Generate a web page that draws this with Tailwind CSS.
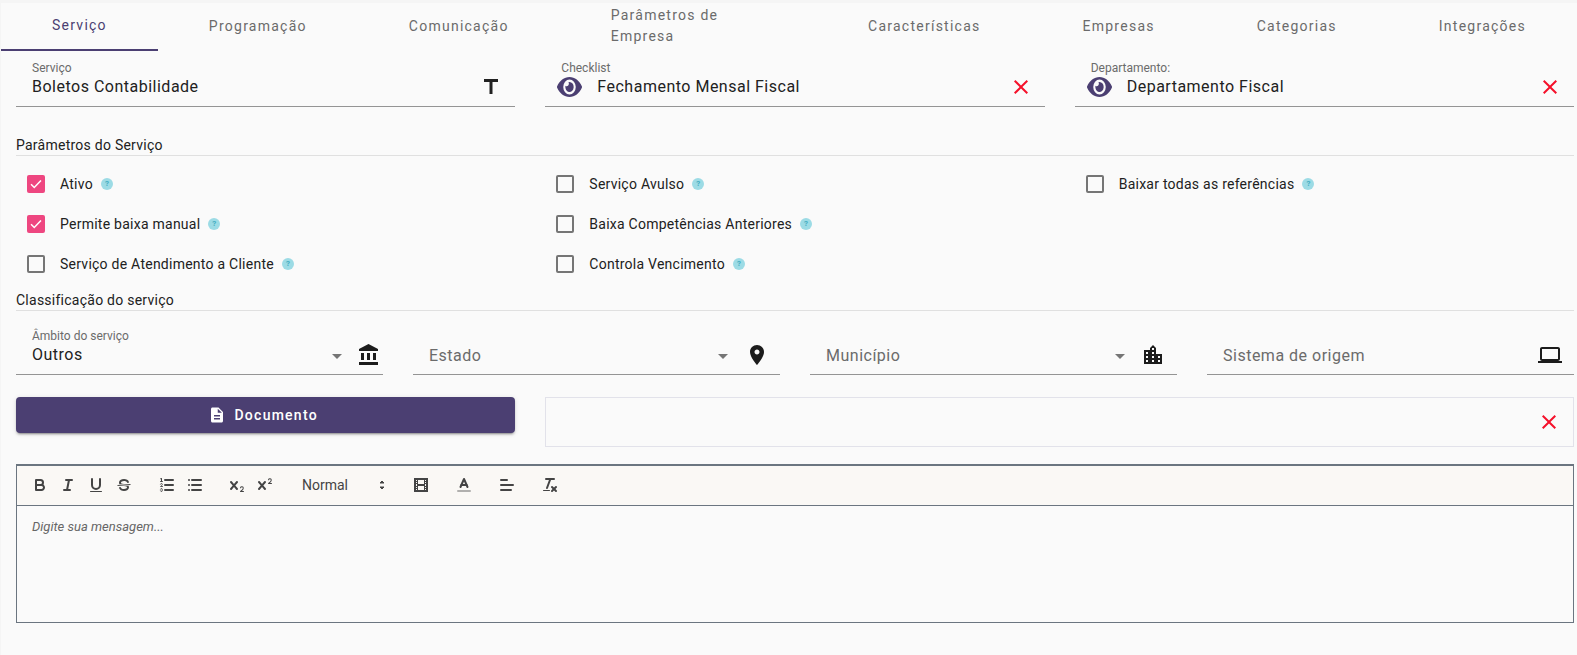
<!DOCTYPE html>
<html lang="pt-BR">
<head>
<meta charset="utf-8">
<title>Serviço</title>
<script src="https://cdn.jsdelivr.net/npm/@tailwindcss/browser@4"></script>
</head>
<body class="overflow-hidden">
<div class="h-[655px] w-[1577px] bg-[#f5f5f5] pt-[3px] pl-px font-['Roboto',sans-serif] text-[14px] tracking-[0.25px] text-[#212121]">
<div class="h-full bg-[#fafafa]">

<!-- Tabs -->
<div class="flex h-[48px] text-[14px] tracking-[1.25px] text-[#6b6b6b]">
  <div class="flex flex-auto items-center justify-center border-b-2 border-[#4b3f72] px-[51px] pb-[2px] text-[#4b3f72]">Serviço</div>
  <div class="flex flex-auto items-center justify-center px-[51px] pb-[2px]">Programação</div>
  <div class="flex flex-auto items-center justify-center px-[51px] pb-[2px]">Comunicação</div>
  <div class="flex flex-auto items-center justify-center px-[51px] pb-[2px]">Parâmetros de Empresa</div>
  <div class="flex flex-auto items-center justify-center px-[51px] pb-[2px]">Características</div>
  <div class="flex flex-auto items-center justify-center px-[51px] pb-[2px]">Empresas</div>
  <div class="flex flex-auto items-center justify-center px-[51px] pb-[2px]">Categorias</div>
  <div class="flex flex-auto items-center justify-center px-[51px] pb-[2px]">Integrações</div>
</div>

<div class="pl-[15px] pr-[3px]">
  <!-- Top fields -->
  <div class="grid grid-cols-3 gap-x-[30px]">
    <div class="border-b border-[#949494] pt-[10px] pb-[7px]">
      <div class="pl-4 text-[12px] leading-[14px] tracking-normal text-[#6b6b6b]">Serviço</div>
      <div class="flex h-6 items-center justify-between pl-4 pr-3">
        <span class="text-[16px] leading-6 tracking-[0.5px]">Boletos Contabilidade</span>
        <svg class="h-6 w-6 text-[#212121]" viewBox="0 0 24 24" fill="currentColor"><path d="M5 4v3h5.5v12h3V7H19V4z"/></svg>
      </div>
    </div>
    <div class="border-b border-[#949494] pt-[10px] pb-[7px]">
      <div class="pl-4 text-[12px] leading-[14px] tracking-normal text-[#6b6b6b]">Checklist</div>
      <div class="flex h-6 items-center pl-3 pr-3">
        <svg class="mr-[15px] h-[20px] w-[25px] text-[#4b3f72]" viewBox="0 64 576 384" preserveAspectRatio="none" fill="currentColor"><path d="M572.52 241.4C518.29 135.59 410.93 64 288 64S57.68 135.64 3.48 241.41a32.35 32.35 0 0 0 0 29.19C57.71 376.41 165.07 448 288 448s230.32-71.64 284.52-177.41a32.35 32.35 0 0 0 0-29.19zM288 400a144 144 0 1 1 144-144 143.93 143.93 0 0 1-144 144zm0-240a95.31 95.31 0 0 0-25.31 3.79 47.85 47.85 0 0 1-66.9 66.9A95.78 95.78 0 1 0 288 160z"/></svg>
        <span class="flex-1 text-[16px] leading-6 tracking-[0.5px]">Fechamento Mensal Fiscal</span>
        <svg class="h-6 w-6 text-[#f5102a]" viewBox="0 0 24 24" fill="currentColor"><path d="M19 6.41L17.59 5 12 10.59 6.41 5 5 6.41 10.59 12 5 17.59 6.41 19 12 13.41 17.59 19 19 17.59 13.41 12z"/></svg>
      </div>
    </div>
    <div class="border-b border-[#949494] pt-[10px] pb-[7px]">
      <div class="pl-4 text-[12px] leading-[14px] tracking-normal text-[#6b6b6b]">Departamento:</div>
      <div class="flex h-6 items-center pl-3 pr-3">
        <svg class="mr-[15px] h-[20px] w-[25px] text-[#4b3f72]" viewBox="0 64 576 384" preserveAspectRatio="none" fill="currentColor"><path d="M572.52 241.4C518.29 135.59 410.93 64 288 64S57.68 135.64 3.48 241.41a32.35 32.35 0 0 0 0 29.19C57.71 376.41 165.07 448 288 448s230.32-71.64 284.52-177.41a32.35 32.35 0 0 0 0-29.19zM288 400a144 144 0 1 1 144-144 143.93 143.93 0 0 1-144 144zm0-240a95.31 95.31 0 0 0-25.31 3.79 47.85 47.85 0 0 1-66.9 66.9A95.78 95.78 0 1 0 288 160z"/></svg>
        <span class="flex-1 text-[16px] leading-6 tracking-[0.5px]">Departamento Fiscal</span>
        <svg class="h-6 w-6 text-[#f5102a]" viewBox="0 0 24 24" fill="currentColor"><path d="M19 6.41L17.59 5 12 10.59 6.41 5 5 6.41 10.59 12 5 17.59 6.41 19 12 13.41 17.59 19 19 17.59 13.41 12z"/></svg>
      </div>
    </div>
  </div>

  <!-- Parâmetros -->
  <div class="mt-[29px] h-[20px] border-b border-[#e0e0e0] leading-[19px]">Parâmetros do Serviço</div>
  <div class="mt-[8px] grid grid-cols-3 gap-x-[30px]">
    <div class="flex h-10 items-center pl-[11px]">
      <span class="mr-[15px] flex h-[18px] w-[18px] items-center justify-center rounded-[2px] bg-[#ee4680]"><svg class="h-[14px] w-[14px]" viewBox="0 0 24 24" fill="none" stroke="#fff" stroke-width="2.6"><path d="M3.5 12.5l5.5 5.5L20.5 6"/></svg></span>
      <span class="pt-px">Ativo</span>
      <span class="ml-[8px] flex h-3 w-3 items-center justify-center rounded-full bg-[#9cdbe5] text-[8px] font-bold leading-none tracking-normal text-[#45aec2]">?</span>
    </div>
    <div class="flex h-10 items-center pl-[11px]">
      <span class="mr-[15px] h-[18px] w-[18px] rounded-[2px] border-2 border-[#757575]"></span>
      <span class="pt-px">Serviço Avulso</span>
      <span class="ml-[8px] flex h-3 w-3 items-center justify-center rounded-full bg-[#9cdbe5] text-[8px] font-bold leading-none tracking-normal text-[#45aec2]">?</span>
    </div>
    <div class="flex h-10 items-center pl-[11px]">
      <span class="mr-[15px] h-[18px] w-[18px] rounded-[2px] border-2 border-[#757575]"></span>
      <span class="pt-px">Baixar todas as referências</span>
      <span class="ml-[8px] flex h-3 w-3 items-center justify-center rounded-full bg-[#9cdbe5] text-[8px] font-bold leading-none tracking-normal text-[#45aec2]">?</span>
    </div>
    <div class="flex h-10 items-center pl-[11px]">
      <span class="mr-[15px] flex h-[18px] w-[18px] items-center justify-center rounded-[2px] bg-[#ee4680]"><svg class="h-[14px] w-[14px]" viewBox="0 0 24 24" fill="none" stroke="#fff" stroke-width="2.6"><path d="M3.5 12.5l5.5 5.5L20.5 6"/></svg></span>
      <span class="pt-px">Permite baixa manual</span>
      <span class="ml-[8px] flex h-3 w-3 items-center justify-center rounded-full bg-[#9cdbe5] text-[8px] font-bold leading-none tracking-normal text-[#45aec2]">?</span>
    </div>
    <div class="flex h-10 items-center pl-[11px]">
      <span class="mr-[15px] h-[18px] w-[18px] rounded-[2px] border-2 border-[#757575]"></span>
      <span class="pt-px">Baixa Competências Anteriores</span>
      <span class="ml-[8px] flex h-3 w-3 items-center justify-center rounded-full bg-[#9cdbe5] text-[8px] font-bold leading-none tracking-normal text-[#45aec2]">?</span>
    </div>
    <div></div>
    <div class="flex h-10 items-center pl-[11px]">
      <span class="mr-[15px] h-[18px] w-[18px] rounded-[2px] border-2 border-[#757575]"></span>
      <span class="pt-px">Serviço de Atendimento a Cliente</span>
      <span class="ml-[8px] flex h-3 w-3 items-center justify-center rounded-full bg-[#9cdbe5] text-[8px] font-bold leading-none tracking-normal text-[#45aec2]">?</span>
    </div>
    <div class="flex h-10 items-center pl-[11px]">
      <span class="mr-[15px] h-[18px] w-[18px] rounded-[2px] border-2 border-[#757575]"></span>
      <span class="pt-px">Controla Vencimento</span>
      <span class="ml-[8px] flex h-3 w-3 items-center justify-center rounded-full bg-[#9cdbe5] text-[8px] font-bold leading-none tracking-normal text-[#45aec2]">?</span>
    </div>
    <div></div>
  </div>

  <!-- Classificação -->
  <div class="mt-[7px] h-[20px] border-b border-[#e0e0e0] leading-[19px]">Classificação do serviço</div>
  <div class="grid grid-cols-4 gap-x-[30px]">
    <div class="h-[64px] border-b border-[#949494] pt-[18px]">
      <div class="pl-4 text-[12px] leading-[14px] tracking-normal text-[#6b6b6b]">Âmbito do serviço</div>
      <div class="flex h-6 items-center pl-4 pr-[2px]">
        <span class="flex-1 text-[16px] leading-6 tracking-[0.5px]">Outros</span>
        <svg class="mr-[15px] mt-[2px] h-[5px] w-[10px] text-[#757575]" viewBox="0 0 10 5" fill="currentColor"><path d="M0 0h10L5 5z"/></svg>
        <svg class="h-6 w-6 text-[#1c1c1c]" viewBox="0 0 24 24" fill="currentColor"><path d="M4 10v7h3v-7H4zm6 0v7h3v-7h-3zM2 22h19v-3H2v3zm14-12v7h3v-7h-3zm-4.5-9L2 6v2h19V6l-9.5-5z"/></svg>
      </div>
    </div>
    <div class="h-[64px] border-b border-[#949494] pt-[33px]">
      <div class="flex h-6 items-center pl-4 pr-[11px]">
        <span class="flex-1 text-[16px] leading-6 tracking-[0.5px] text-[#6b6b6b]">Estado</span>
        <svg class="mr-[17px] h-[5px] w-[10px] text-[#757575]" viewBox="0 0 10 5" fill="currentColor"><path d="M0 0h10L5 5z"/></svg>
        <svg class="-mt-[2px] h-6 w-6 text-[#1c1c1c]" viewBox="0 0 24 24" fill="currentColor"><path d="M12 2C8.13 2 5 5.13 5 9c0 5.25 7 13 7 13s7-7.75 7-13c0-3.87-3.13-7-7-7zm0 9.5c-1.38 0-2.5-1.12-2.5-2.5s1.12-2.5 2.5-2.5 2.5 1.12 2.5 2.5-1.12 2.5-2.5 2.5z"/></svg>
      </div>
    </div>
    <div class="h-[64px] border-b border-[#949494] pt-[33px]">
      <div class="flex h-6 items-center pl-4 pr-[12px]">
        <span class="flex-1 text-[16px] leading-6 tracking-[0.5px] text-[#6b6b6b]">Município</span>
        <svg class="mr-[16px] h-[5px] w-[10px] text-[#757575]" viewBox="0 0 10 5" fill="currentColor"><path d="M0 0h10L5 5z"/></svg>
        <svg class="-mt-[2px] h-6 w-6 text-[#1c1c1c]" viewBox="0 0 24 24" fill="currentColor"><path d="M15 11V5l-3-3-3 3v2H3v14h18V11h-6zm-8 8H5v-2h2v2zm0-4H5v-2h2v2zm0-4H5V9h2v2zm6 8h-2v-2h2v2zm0-4h-2v-2h2v2zm0-4h-2V9h2v2zm0-4h-2V5h2v2zm6 12h-2v-2h2v2zm0-4h-2v-2h2v2z"/></svg>
      </div>
    </div>
    <div class="h-[64px] border-b border-[#949494] pt-[33px]">
      <div class="flex h-6 items-center pl-4 pr-[12px]">
        <span class="flex-1 text-[16px] leading-6 tracking-[0.5px] text-[#6b6b6b]">Sistema de origem</span>
        <svg class="-mt-[2px] h-6 w-6 text-[#1c1c1c]" viewBox="0 0 24 24" fill="currentColor"><path d="M20 18c1.1 0 1.99-.9 1.99-2L22 6c0-1.1-.9-2-2-2H4c-1.1 0-2 .9-2 2v10c0 1.1.9 2 2 2H0v2h24v-2h-4zM4 6h16v10H4V6z"/></svg>
      </div>
    </div>
  </div>

  <!-- Documento -->
  <div class="mt-[22px] grid grid-cols-3 items-start gap-x-[30px]">
    <div class="flex h-[36px] items-center justify-center rounded-[4px] bg-[#4b3f72] pr-[5px] text-[14px] font-medium tracking-[1.25px] text-white shadow-[0_3px_1px_-2px_rgba(0,0,0,0.2),0_2px_2px_0_rgba(0,0,0,0.14),0_1px_5px_0_rgba(0,0,0,0.12)]">
      <svg class="mr-2 h-[18px] w-[18px]" viewBox="0 0 24 24" fill="currentColor"><path d="M14 2H6c-1.1 0-1.99.9-1.99 2L4 20c0 1.1.89 2 1.99 2H18c1.1 0 2-.9 2-2V8l-6-6zm2 16H8v-2h8v2zm0-4H8v-2h8v2zm-3-5V3.5L18.5 9H13z"/></svg>
      <span>Documento</span>
    </div>
    <div class="col-span-2 flex h-[50px] items-center justify-end border border-[#e2e2ea] pr-[12px]">
      <svg class="h-6 w-6 text-[#f5102a]" viewBox="0 0 24 24" fill="currentColor"><path d="M19 6.41L17.59 5 12 10.59 6.41 5 5 6.41 10.59 12 5 17.59 6.41 19 12 13.41 17.59 19 19 17.59 13.41 12z"/></svg>
    </div>
  </div>

  <!-- Editor -->
  <div class="mt-[17px] h-[159px] border border-t-2 border-[#6b7580]">
    <div class="flex h-[40px] items-start border-b border-[#6b7580] bg-[#faf8f5] pl-[9px] pt-[7px] text-[#444]">
      <div class="flex">
        <span class="flex h-6 w-7 items-center justify-center"><svg class="h-[18px] w-[18px]" viewBox="0 0 18 18" fill="none" stroke="#444" stroke-width="2" stroke-linecap="round" stroke-linejoin="round"><path d="M5,4H9.5A2.5,2.5,0,0,1,12,6.5v0A2.5,2.5,0,0,1,9.5,9H5A0,0,0,0,1,5,9V4A0,0,0,0,1,5,4Z"/><path d="M5,9h5.5A2.5,2.5,0,0,1,13,11.5v0A2.5,2.5,0,0,1,10.5,14H5a0,0,0,0,1,0,0V9A0,0,0,0,1,5,9Z"/></svg></span>
        <span class="flex h-6 w-7 items-center justify-center"><svg class="h-[18px] w-[18px]" viewBox="0 0 18 18" fill="none" stroke="#444" stroke-width="2" stroke-linecap="round"><line x1="7" x2="13" y1="4" y2="4"/><line x1="5" x2="11" y1="14" y2="14"/><line x1="8" x2="10" y1="14" y2="4"/></svg></span>
        <span class="flex h-6 w-7 items-center justify-center"><svg class="h-[18px] w-[18px]" viewBox="0 0 18 18" fill="none" stroke="#444" stroke-width="2" stroke-linecap="round"><path d="M5,3V9a4.012,4.012,0,0,0,4,4H9a4.012,4.012,0,0,0,4-4V3"/><rect fill="#444" stroke="none" height="1" rx=".5" ry=".5" width="12" x="3" y="15"/></svg></span>
        <span class="flex h-6 w-7 items-center justify-center"><svg class="h-[18px] w-[18px]" viewBox="0 0 18 18" fill="none"><line stroke="#444" stroke-width="1" x1="15.5" x2="2.5" y1="8.5" y2="9.5"/><path fill="#444" d="M9.007,8C6.542,7.791,6,7.519,6,6.5,6,5.792,7.283,5,9,5c1.571,0,2.765.679,2.969,1.309a1,1,0,0,0,1.9-.617C13.356,4.106,11.354,3,9,3,6.2,3,4,4.538,4,6.5a3.2,3.2,0,0,0,.5,1.843Z"/><path fill="#444" d="M8.984,10C11.457,10.208,12,10.479,12,11.5c0,.708-1.283,1.5-3,1.5-1.571,0-2.765-.679-2.969-1.309a1,1,0,1,0-1.9.617C4.644,13.894,6.646,15,9,15c2.8,0,5-1.538,5-3.5a3.2,3.2,0,0,0-.5-1.843Z"/></svg></span>
      </div>
      <div class="ml-[15px] flex">
        <span class="flex h-6 w-7 items-center justify-center"><svg class="h-[18px] w-[18px]" viewBox="0 0 18 18" fill="none" stroke="#444" stroke-linecap="round" stroke-linejoin="round"><g stroke-width="2"><line x1="7" x2="15" y1="4" y2="4"/><line x1="7" x2="15" y1="9" y2="9"/><line x1="7" x2="15" y1="14" y2="14"/></g><line stroke-width=".9" x1="2.5" x2="4.5" y1="5.5" y2="5.5"/><path fill="#444" stroke="none" d="M3.5,6A0.5,0.5,0,0,1,3,5.5V3.085l-0.276.138A0.5,0.5,0,0,1,2.053,3c-0.124-.247-0.023-0.324.224-0.447l1-.5A0.5,0.5,0,0,1,4,2.5v3A0.5,0.5,0,0,1,3.5,6Z"/><path stroke-width=".9" d="M4.5,10.5h-2c0-.234,1.85-1.076,1.85-2.234A0.959,0.959,0,0,0,2.5,8.156"/><path stroke-width=".9" d="M2.5,14.846a0.959,0.959,0,0,0,1.85-.109A0.7,0.7,0,0,0,3.75,14a0.688,0.688,0,0,0,.6-0.736,0.959,0.959,0,0,0-1.85-.109"/></svg></span>
        <span class="flex h-6 w-7 items-center justify-center"><svg class="h-[18px] w-[18px]" viewBox="0 0 18 18" fill="none" stroke="#444" stroke-width="2" stroke-linecap="round"><line x1="6" x2="15" y1="4" y2="4"/><line x1="6" x2="15" y1="9" y2="9"/><line x1="6" x2="15" y1="14" y2="14"/><line x1="3" x2="3" y1="4" y2="4"/><line x1="3" x2="3" y1="9" y2="9"/><line x1="3" x2="3" y1="14" y2="14"/></svg></span>
      </div>
      <div class="ml-[14px] flex">
        <span class="flex h-6 w-7 items-center justify-center"><svg class="h-[18px] w-[18px]" viewBox="0 0 18 18" fill="#444"><path d="M15.5,15H13.861a3.858,3.858,0,0,0,1.914-2.975,1.8,1.8,0,0,0-1.6-1.751A1.921,1.921,0,0,0,12.021,11.7a0.50013,0.50013,0,1,0,.957.291h0a0.914,0.914,0,0,1,1.053-.725,0.81,0.81,0,0,1,.744.762c0,1.076-1.16971,1.86982-1.93971,2.43082A1.45639,1.45639,0,0,0,12,15.5a0.5,0.5,0,0,0,.5.5h3A0.5,0.5,0,0,0,15.5,15Z"/><path d="M9.65,5.241a1,1,0,0,0-1.409.108L6,7.964,3.759,5.349A1,1,0,0,0,2.192,6.59178Q2.21,6.6,2.241,6.651L4.684,9.5,2.241,12.35A1,1,0,0,0,3.759,13.651L6,11.036l2.241,2.615a1,1,0,0,0,1.519-1.3L7.316,9.5,9.759,6.651A1,1,0,0,0,9.65,5.241Z"/></svg></span>
        <span class="flex h-6 w-7 items-center justify-center"><svg class="h-[18px] w-[18px]" viewBox="0 0 18 18" fill="#444"><path d="M15.5,7H13.861a4.015,4.015,0,0,0,1.914-2.975,1.8,1.8,0,0,0-1.6-1.751A1.922,1.922,0,0,0,12.021,3.7a0.5,0.5,0,1,0,.957.291,0.917,0.917,0,0,1,1.053-.725,0.81,0.81,0,0,1,.744.762c0,1.077-1.164,1.925-1.934,2.486A1.423,1.423,0,0,0,12,7.5a0.5,0.5,0,0,0,.5.5h3A0.5,0.5,0,0,0,15.5,7Z"/><path d="M9.651,5.241a1,1,0,0,0-1.41.108L6,7.964,3.759,5.349a1,1,0,1,0-1.519,1.3L4.683,9.5,2.241,12.35a1,1,0,1,0,1.519,1.3L6,11.036l2.241,2.615a1,1,0,0,0,1.519-1.3L7.317,9.5,9.759,6.651A1,1,0,0,0,9.651,5.241Z"/></svg></span>
      </div>
      <div class="ml-[15px] flex h-6 w-[98px] items-center justify-between pl-2 pr-[1px] tracking-normal">
        <span class="text-[14px]">Normal</span>
        <svg class="h-[18px] w-[18px]" viewBox="0 0 18 18" fill="#444" stroke="#444" stroke-linejoin="round" stroke-width="1"><polygon points="7 11 9 13 11 11 7 11"/><polygon points="7 7 9 5 11 7 7 7"/></svg>
      </div>
      <span class="ml-[15px] flex h-6 w-7 items-center justify-center"><svg class="h-[18px] w-[18px]" viewBox="0 0 18 18" fill="#444"><rect fill="none" stroke="#444" stroke-width="2" height="12" width="12" x="3" y="3"/><rect height="12" width="1" x="5" y="3"/><rect height="12" width="1" x="12" y="3"/><rect height="2" width="8" x="5" y="8"/><rect height="1" width="3" x="3" y="5"/><rect height="1" width="3" x="3" y="7"/><rect height="1" width="3" x="3" y="10"/><rect height="1" width="3" x="3" y="12"/><rect height="1" width="3" x="12" y="5"/><rect height="1" width="3" x="12" y="7"/><rect height="1" width="3" x="12" y="10"/><rect height="1" width="3" x="12" y="12"/></svg></span>
      <span class="ml-[15px] flex h-6 w-7 items-center justify-center"><svg class="h-[18px] w-[18px]" viewBox="0 0 18 18" fill="none" stroke="#444" stroke-width="2" stroke-linecap="round" stroke-linejoin="round"><line stroke-opacity=".4" x1="3" x2="15" y1="15" y2="15"/><polyline points="5.5 11 9 3 12.5 11"/><line x1="11.63" x2="6.38" y1="9" y2="9"/></svg></span>
      <span class="ml-[15px] flex h-6 w-7 items-center justify-center"><svg class="h-[18px] w-[18px]" viewBox="0 0 18 18" fill="none" stroke="#444" stroke-width="2" stroke-linecap="round"><line x1="3" x2="15" y1="9" y2="9"/><line x1="3" x2="13" y1="14" y2="14"/><line x1="3" x2="9" y1="4" y2="4"/></svg></span>
      <span class="ml-[15px] flex h-6 w-7 items-center justify-center"><svg class="h-[18px] w-[18px]" viewBox="0 0 18 18" fill="none" stroke="#444" stroke-width="2" stroke-linecap="round"><line x1="5" x2="13" y1="3" y2="3"/><line x1="6" x2="9.35" y1="12" y2="3"/><line x1="11" x2="15" y1="11" y2="15"/><line x1="15" x2="11" y1="11" y2="15"/><rect fill="#444" stroke="none" height="1" rx=".5" ry=".5" width="7" x="2" y="14"/></svg></span>
    </div>
    <div class="px-[15px] py-[12px] text-[13px] italic leading-[18.5px] tracking-normal text-[#666]">Digite sua mensagem...</div>
  </div>
</div>
</div>
</div>
</body>
</html>
